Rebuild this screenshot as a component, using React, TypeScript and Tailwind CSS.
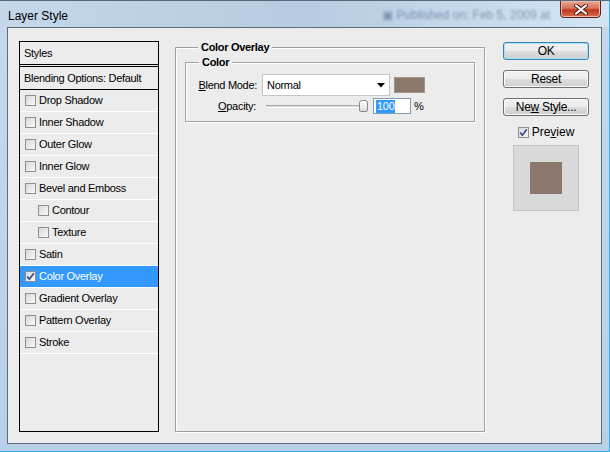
import React from 'react';

const font = { fontFamily: '"Liberation Sans", Arial, sans-serif' };

function Check({ checked }: { checked?: boolean }) {
    return (
        <span className="w-[11px] h-[11px] border border-[#8f8f8f] bg-gradient-to-br from-[#d8d8d8] to-[#fafafa] flex items-center justify-center shrink-0">
            {checked && (
                <svg width="9" height="9" viewBox="0 0 9 9">
                    <path d="M1.2 4.6 L3.4 7.2 L7.8 1.2" stroke="#3b4a8f" strokeWidth="1.7" fill="none" />
                </svg>
            )}
        </span>
    );
}

const effects = [
    { name: 'Drop Shadow' },
    { name: 'Inner Shadow' },
    { name: 'Outer Glow' },
    { name: 'Inner Glow' },
    { name: 'Bevel and Emboss' },
    { name: 'Contour', sub: true },
    { name: 'Texture', sub: true },
    { name: 'Satin' },
    { name: 'Color Overlay', active: true },
    { name: 'Gradient Overlay' },
    { name: 'Pattern Overlay' },
    { name: 'Stroke' },
];

function Btn({ children, focus }: { children: React.ReactNode; focus?: boolean }) {
    return (
        <button
            className={`w-[86px] h-[18px] rounded-[3px] border text-[12px] leading-none text-black flex items-center justify-center
                bg-[linear-gradient(#f2f2f2_0%,#ebebeb_50%,#dddddd_50%,#cfcfcf_100%)]
                ${focus ? 'border-[#3c7fb1] shadow-[inset_0_0_0_1px_#a6e1f8]' : 'border-[#707070] shadow-[inset_0_0_0_1px_#fbfbfb]'}`}
        >
            <span>{children}</span>
        </button>
    );
}

export default function App() {
    return (
        <div
            style={font}
            className="w-[610px] h-[452px] flex flex-col bg-gradient-to-b from-[#c6d9ec] to-[#b7d0e8] border-t border-[#57687a] border-r border-b border-r-[#3ab0e6] border-b-[#3ab0e6] overflow-hidden select-none"
        >
            {/* title bar */}
            <div className="h-[26px] flex items-start bg-gradient-to-r from-[#c4d7ea] via-[#b6cbe1] to-[#d3e4f5]">
                <span className="pl-[8px] pt-[6px] text-[12px] text-black">Layer Style</span>
                <span className="ml-auto mr-[10px] pt-[5px] text-[12px] text-[#4e6a8e] opacity-60 blur-[1.3px]">
                    ▣ Published on: Feb 5, 2009 at
                </span>
                <div className="mr-[8px] -mt-px w-[41px] h-[18px] rounded-b-[4px] border border-[#5a2018] bg-[linear-gradient(#e9a898_0%,#d9735c_45%,#c1391f_55%,#d4704e_100%)] flex items-center justify-center shadow-[inset_0_0_0_1px_#f0b9a8]">
                    <svg width="14" height="11" viewBox="0 0 14 11">
                        <path d="M2 1.5 L12 9.5 M12 1.5 L2 9.5" stroke="#4a1a12" strokeWidth="4" strokeLinecap="round" />
                        <path d="M2 1.5 L12 9.5 M12 1.5 L2 9.5" stroke="#ffffff" strokeWidth="2.2" strokeLinecap="round" />
                    </svg>
                </div>
            </div>

            {/* body */}
            <div className="flex-1 mx-[7px] mb-[7px] border border-[#5e6c79] bg-[#ececec] flex pl-[11px] pt-[13px] pb-[11px] text-[11px] tracking-[-0.3px] text-black">
                {/* styles list */}
                <div className="w-[140px] border border-black flex flex-col">
                    <div className="h-[23px] border-b border-black flex items-center pl-[4px]">Styles</div>
                    <div className="h-px bg-[#ececec]" />
                    <div className="h-[24px] border-t border-b border-black flex items-center pl-[4px]">Blending Options: Default</div>
                    {effects.map((e) => (
                        <div
                            key={e.name}
                            className={`h-[22px] border-b border-white flex items-center gap-[3px] ${e.sub ? 'pl-[18px]' : 'pl-[5px]'} ${e.active ? 'bg-[#3399ff] text-white' : ''}`}
                        >
                            <Check checked={e.active} />
                            <span>{e.name}</span>
                        </div>
                    ))}
                </div>

                {/* color overlay group */}
                <fieldset className="ml-[16px] w-[310px] border border-[#a0a0a0] shadow-[1px_1px_0_#ffffff,inset_1px_1px_0_#ffffff] pl-[9px] pr-[8px] pt-[2px]">
                    <legend className="ml-[13px] px-[3px] font-bold leading-[13px] bg-[#ececec]">Color Overlay</legend>
                    <fieldset className="w-[290px] border border-[#a0a0a0] shadow-[1px_1px_0_#ffffff,inset_1px_1px_0_#ffffff] pt-[5px] pb-[7px]">
                        <legend className="ml-[13px] px-[3px] font-bold leading-[13px] bg-[#ececec]">Color</legend>
                        <div className="flex items-center h-[22px]">
                            <span className="w-[72px] text-right pr-px"><u>B</u>lend Mode:</span>
                            <div className="ml-[4px] w-[128px] h-[22px] bg-white border border-[#c4c6c9] flex items-center pl-[4px] pr-[4px]">
                                <span>Normal</span>
                                <svg className="ml-auto" width="8" height="5" viewBox="0 0 8 5">
                                    <path d="M0 0 H8 L4 4.5 Z" fill="#000" />
                                </svg>
                            </div>
                            <div className="ml-[4px] w-[31px] h-[16px] bg-[#8b776b] border border-[#a49488]" />
                        </div>
                        <div className="flex items-center h-[16px] mt-[2px]">
                            <span className="w-[72px] text-right pr-[2px]"><u>O</u>pacity:</span>
                            <div className="ml-[8px] w-[102px] flex items-center">
                                <div className="flex-1 h-[3px] border-t border-[#a8a8a8] border-b border-b-white bg-[#dcdcdc]" />
                                <div className="w-[9px] h-[12px] rounded-t-[3px] rounded-b-[2px] border border-[#8a8a8a] bg-gradient-to-b from-[#ffffff] to-[#dcdcdc] shrink-0" />
                            </div>
                            <div className="ml-[5px] w-[38px] h-[16px] bg-white border border-[#7f9db9] flex items-center pl-[2px]">
                                <span className="bg-[#3399ff] text-white leading-[13px] px-px">100</span>
                            </div>
                            <span className="ml-[3px]">%</span>
                        </div>
                    </fieldset>
                </fieldset>

                {/* buttons */}
                <div className="ml-[18px] w-[86px] flex flex-col items-center pt-px">
                    <Btn focus>OK</Btn>
                    <div className="h-[10px]" />
                    <Btn>Reset</Btn>
                    <div className="h-[10px]" />
                    <Btn>Ne<u>w</u> Style...</Btn>
                    <label className="mt-[9px] h-[14px] leading-[14px] flex items-center gap-[3px] text-[12px] tracking-normal">
                        <Check checked />
                        <span>Pre<u>v</u>iew</span>
                    </label>
                    <div className="mt-[6px] w-[66px] h-[66px] bg-[#d9d9d9] border border-[#c6c6c6] flex items-center justify-center">
                        <div className="w-[32px] h-[32px] bg-[#8b776b]" />
                    </div>
                </div>
            </div>
        </div>
    );
}
